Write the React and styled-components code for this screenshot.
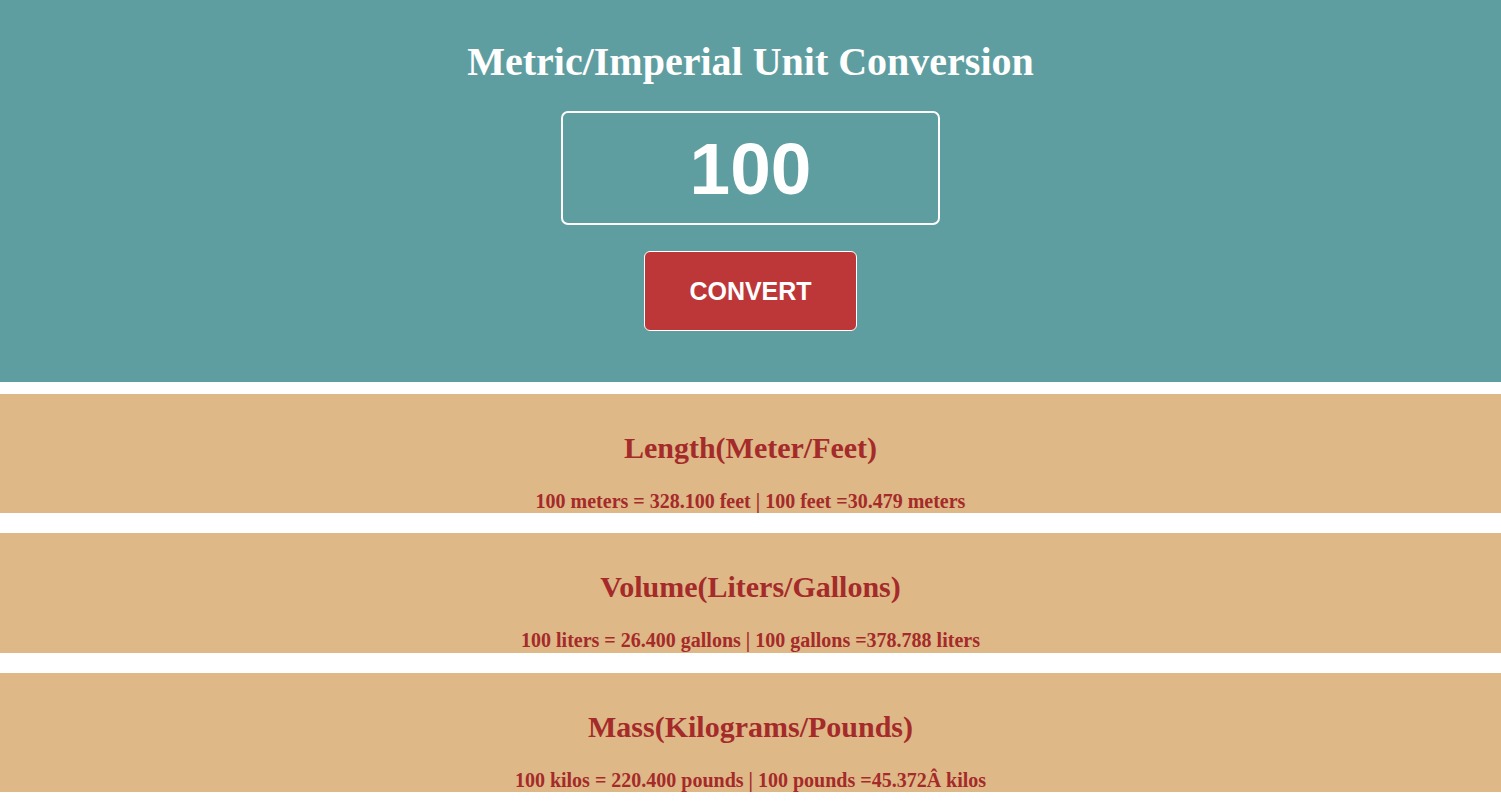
import React from "react";
import styled, { createGlobalStyle } from "styled-components";

const GlobalStyle = createGlobalStyle`
  html, body { margin: 0; padding: 0; background: #ffffff; }
  body { font-family: "Liberation Serif", "Times New Roman", serif; }
  * { box-sizing: border-box; }
`;

const Page = styled.div`
  display: flex;
  flex-direction: column;
`;

const Header = styled.header`
  background: #5f9ea0;
  display: flex;
  flex-direction: column;
  align-items: center;
  padding: 42px 0 51px;
`;

const Title = styled.h1`
  margin: 0;
  font-size: 40px;
  line-height: 40px;
  font-weight: 700;
  color: #ffffff;
`;

const NumberInput = styled.input`
  margin-top: 29px;
  width: 379px;
  height: 114px;
  border: 2px solid #ffffff;
  border-radius: 7px;
  background: transparent;
  color: #ffffff;
  font-family: "Liberation Sans", Arial, sans-serif;
  font-weight: 700;
  font-size: 73px;
  text-align: center;
  outline: none;
  padding: 0;
`;

const ConvertButton = styled.button`
  margin-top: 26px;
  width: 213px;
  height: 80px;
  border: 1px solid #ffffff;
  border-radius: 6px;
  background: #be3738;
  color: #ffffff;
  font-family: "Liberation Sans", Arial, sans-serif;
  font-weight: 700;
  font-size: 25px;
  cursor: pointer;
  padding: 0;
`;

const Results = styled.main`
  margin-top: 12px;
  display: flex;
  flex-direction: column;
  gap: 20px;
`;

const Card = styled.section`
  background: #deb887;
  height: 119.33px;
  display: flex;
  flex-direction: column;
  align-items: center;
  padding-top: 39px;
  color: #a52a2a;
  text-align: center;
`;

const CardTitle = styled.h2`
  margin: 0;
  font-size: 30px;
  line-height: 30px;
  font-weight: 700;
`;

const CardText = styled.p`
  margin: 28px 0 0;
  font-size: 20px;
  line-height: 20px;
  font-weight: 700;
`;

const conversions = [
  {
    title: "Length(Meter/Feet)",
    text: "100 meters = 328.100 feet | 100 feet =30.479 meters",
  },
  {
    title: "Volume(Liters/Gallons)",
    text: "100 liters = 26.400 gallons | 100 gallons =378.788 liters",
  },
  {
    title: "Mass(Kilograms/Pounds)",
    text: "100 kilos = 220.400 pounds | 100 pounds =45.372Â kilos",
  },
];

export default function App() {
  return (
    <Page>
      <GlobalStyle />
      <Header>
        <Title>Metric/Imperial Unit Conversion</Title>
        <NumberInput type="text" defaultValue="100" />
        <ConvertButton>CONVERT</ConvertButton>
      </Header>
      <Results>
        {conversions.map((c) => (
          <Card key={c.title}>
            <CardTitle>{c.title}</CardTitle>
            <CardText>{c.text}</CardText>
          </Card>
        ))}
      </Results>
    </Page>
  );
}
